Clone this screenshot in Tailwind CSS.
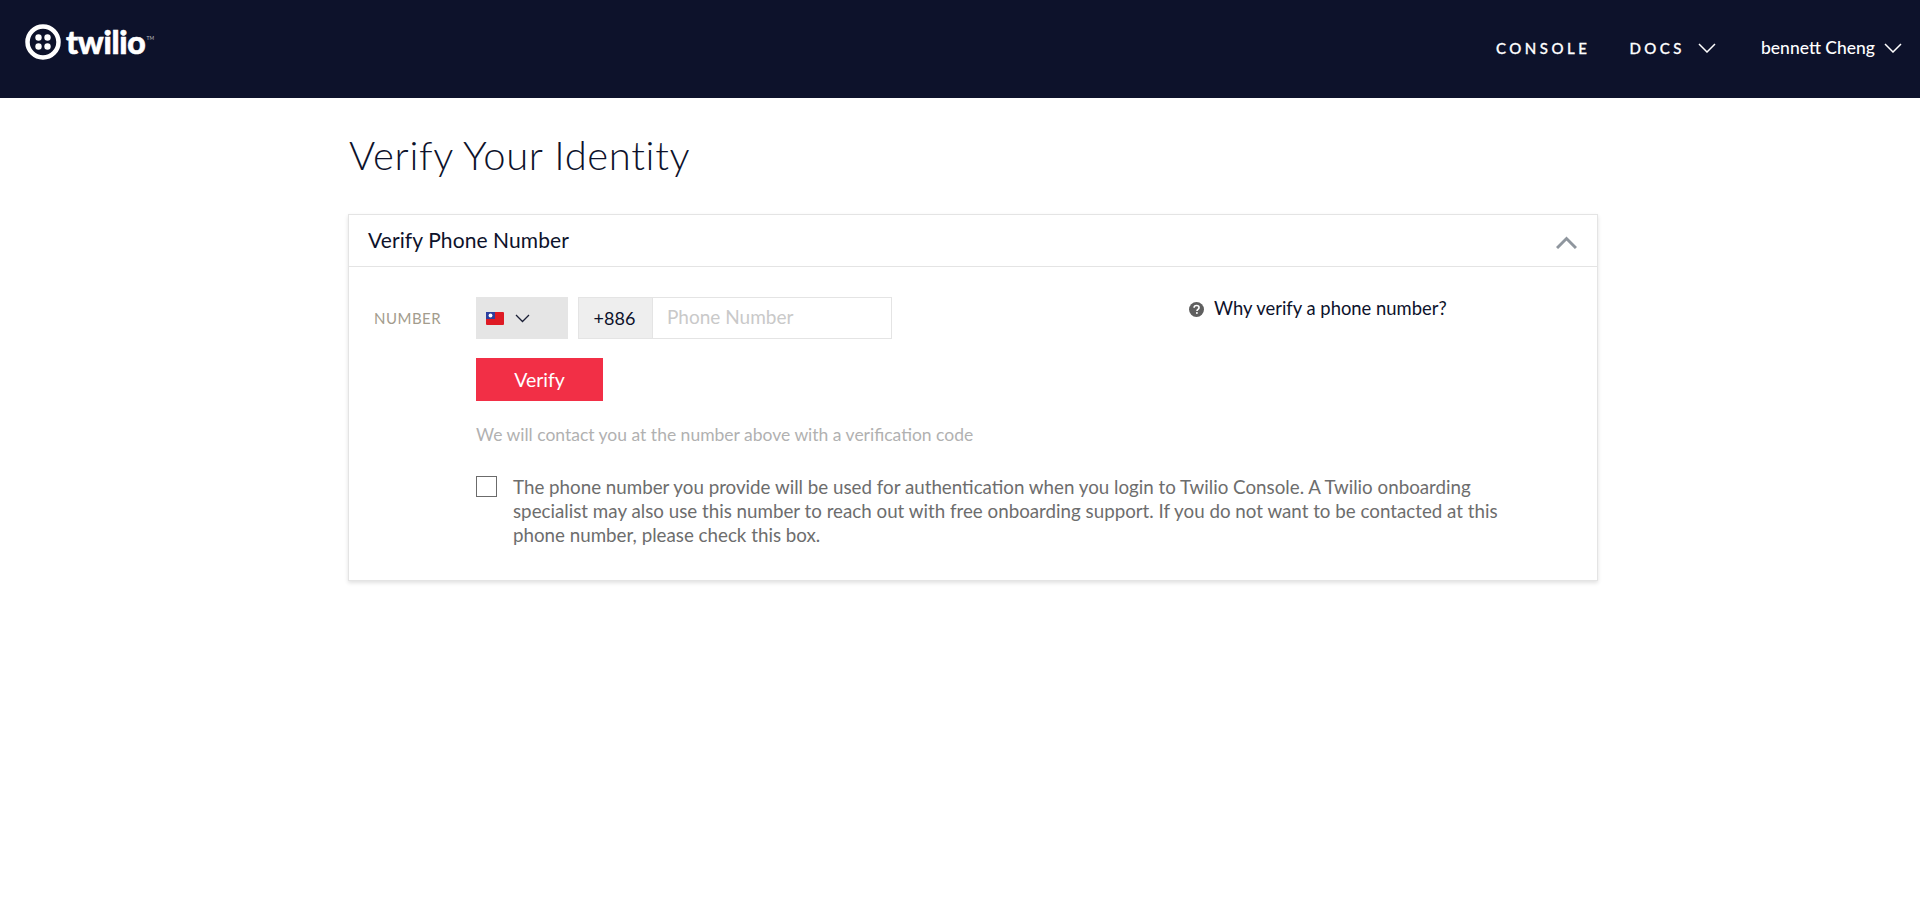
<!DOCTYPE html>
<html lang="en">
<head>
  <meta charset="UTF-8" />
  <title>Verify Your Identity</title>
  <script src="https://cdn.jsdelivr.net/npm/@tailwindcss/browser@4"></script>
</head>
<body class="bg-white min-h-screen font-['Lato',sans-serif] text-[#0d122b]">
  <header class="h-[98px] bg-[#0d122b] flex items-start justify-between text-white">
    <div class="flex items-center ml-[25px] mt-[24px] h-[36px]">
      <svg width="36" height="36" viewBox="0 0 36 36" fill="none">
        <circle cx="18" cy="18" r="15.5" stroke="#fff" stroke-width="4.5"/>
        <circle cx="13.5" cy="13.5" r="3.2" fill="#fff"/>
        <circle cx="22.5" cy="13.5" r="3.2" fill="#fff"/>
        <circle cx="13.5" cy="22.5" r="3.2" fill="#fff"/>
        <circle cx="22.5" cy="22.5" r="3.2" fill="#fff"/>
      </svg>
      <span class="ml-[5px] text-[32px] leading-none font-black tracking-[-0.3px] [-webkit-text-stroke:0.6px_#fff]">twilio</span>
      <span class="text-[5px] self-start mt-[11px] ml-[1px] text-white/70">TM</span>
    </div>
    <nav class="flex items-center h-[96px] text-[15px] font-medium">
      <a class="tracking-[3.5px] mr-[39px] [-webkit-text-stroke:0.3px_#fff]">CONSOLE</a>
      <a class="tracking-[3.5px] [-webkit-text-stroke:0.3px_#fff]">DOCS</a>
      <svg class="ml-[13px]" width="18" height="10" viewBox="0 0 18 10" fill="none"><path d="M1 1l8 8 8-8" stroke="#fff" stroke-width="1.5"/></svg>
      <a class="ml-[45px] text-[17.5px]">bennett Cheng</a>
      <svg class="ml-[9px] mr-[18px]" width="18" height="10" viewBox="0 0 18 10" fill="none"><path d="M1 1l8 8 8-8" stroke="#fff" stroke-width="1.5"/></svg>
    </nav>
  </header>

  <main class="w-[1250px] ml-[348px]">
    <h1 class="h-[116px] pt-[29px] pl-[1px] text-[40px] leading-[56px] font-light tracking-[0.65px]">Verify Your Identity</h1>

    <section class="border border-[#e4e4e4] shadow-[0_2px_4px_rgba(0,0,0,0.12)] h-[367px]">
      <div class="h-[52px] border-b border-[#e4e4e4] flex items-center justify-between pl-[19px] pr-[20px]">
        <h2 class="text-[21px] tracking-[0.1px] pb-[2px]">Verify Phone Number</h2>
        <svg class="mt-[3px]" width="21" height="13" viewBox="0 0 21 13" fill="none"><path d="M1 12l9.5-9.5L20 12" stroke="#8f969e" stroke-width="3"/></svg>
      </div>
      <div class="flex pt-[30px]">
        <label class="w-[127px] pl-[25px] pt-[9px] text-[15px] leading-[24px] tracking-[0.5px] text-[#a39c8d]">NUMBER</label>
        <div class="flex-1">
          <div class="flex items-start">
            <div class="w-[92px] h-[42px] bg-[#e5e5e5] flex items-center pl-[10px]">
              <svg width="18" height="13" viewBox="0 0 18 13">
                <rect width="18" height="13" rx="1" fill="#de1a24"/>
                <rect width="9" height="7" fill="#2c3f9e"/>
                <circle cx="4.5" cy="3.5" r="1.9" fill="#fff"/>
              </svg>
              <svg class="ml-[11px]" width="15" height="9" viewBox="0 0 15 9" fill="none"><path d="M1 1l6.5 6.5L14 1" stroke="#1a1f36" stroke-width="1.3"/></svg>
            </div>
            <div class="ml-[10px] flex h-[42px]">
              <span class="w-[75px] pr-[2px] bg-[#eeeeee] border border-[#e4e4e4] flex items-center justify-center text-[18px]">+886</span>
              <input class="w-[239px] border border-l-0 border-[#e4e4e4] pl-[14px] pb-[2px] text-[19px] outline-none placeholder:text-[#c9c9c9]" placeholder="Phone Number" />
            </div>
            <a class="ml-[297px] flex items-center h-[24px] text-[18.4px] whitespace-nowrap">
              <svg class="mr-[10px]" width="15" height="15" viewBox="0 0 16 16">
                <circle cx="8" cy="8" r="8" fill="#5f5f5f"/>
                <path d="M5.4 6.2c0-1.5 1.2-2.4 2.7-2.4s2.6.9 2.6 2.2c0 1.8-2.2 1.9-2.2 3.5" fill="none" stroke="#fff" stroke-width="1.7"/>
                <rect x="7.5" y="10.8" width="1.8" height="1.8" fill="#fff"/>
              </svg>
              Why verify a phone number?
            </a>
          </div>
          <button class="mt-[19px] w-[127px] h-[43px] bg-[#f22f46] text-white text-[19.5px]">Verify</button>
          <p class="mt-[22px] text-[17.5px] leading-[24px] text-[#b1b1b1]">We will contact you at the number above with a verification code</p>
          <div class="flex mt-[29px]">
            <span class="w-[21px] h-[21px] shrink-0 border border-[#6b6b6b]"></span>
            <p class="ml-[16px] -mt-[1px] w-[1010px] text-[18.75px] leading-[24px] text-[#6d6d6d]">The phone number you provide will be used for authentication when you login to Twilio Console. A Twilio onboarding specialist may also use this number to reach out with free onboarding support. If you do not want to be contacted at this phone number, please check this box.</p>
          </div>
        </div>
      </div>
    </section>
  </main>
</body>
</html>
